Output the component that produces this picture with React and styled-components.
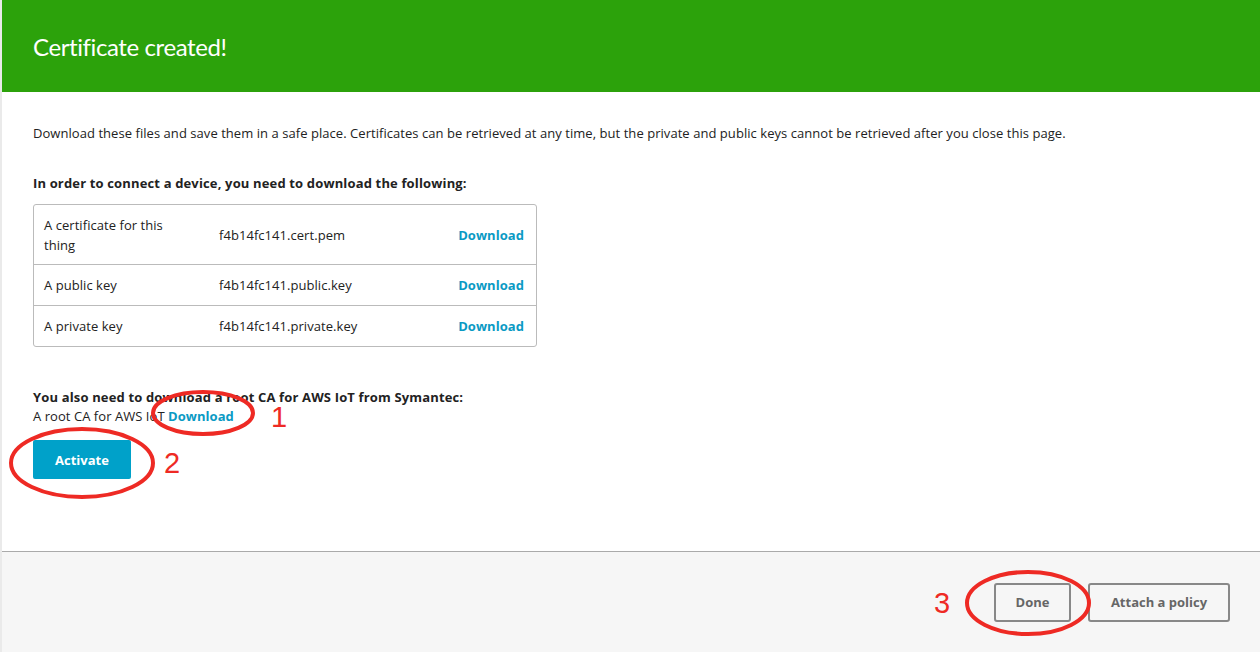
import React from 'react';
import styled, { createGlobalStyle } from 'styled-components';

const GlobalStyle = createGlobalStyle`
  html, body {
    margin: 0;
    padding: 0;
    background: #eaeaea;
  }
  body {
    font-family: "Open Sans", Arial, sans-serif;
    color: #222;
    letter-spacing: 0.05px;
  }
`;

const Page = styled.div`
  position: relative;
  margin-left: 2px;
  height: 652px;
  display: flex;
  flex-direction: column;
  background: #fff;
`;

const Header = styled.header`
  height: 92px;
  background: #2ca20b;
  display: flex;
  align-items: center;
  padding-left: 31px;
`;

const Title = styled.h1`
  margin: 0;
  color: #fff;
  font-family: Lato, "Open Sans", sans-serif;
  font-weight: 400;
  font-size: 24px;
  letter-spacing: -0.4px;
`;

const Body = styled.main`
  flex: 1;
  padding: 32px 31px 0;
  font-size: 13px;
`;

const Intro = styled.p`
  margin: 0 0 32px;
  line-height: 18px;
`;

const SectionTitle = styled.h2`
  margin: 0 0 ${p => p.gap}px;
  font-size: 13px;
  font-weight: 700;
  line-height: 18px;
  letter-spacing: 0.15px;
`;

const Table = styled.div`
  width: 502px;
  border: 1px solid #bbb;
  border-radius: 3px;
  margin-bottom: 41px;
`;

const Row = styled.div`
  display: grid;
  grid-template-columns: 175px 1fr auto;
  align-items: center;
  min-height: ${p => (p.tall ? 59 : 40)}px;
  padding: 0 12px 0 10px;
  border-top: ${p => (p.first ? 'none' : '1px solid #bbb')};
  line-height: 20px;
`;

const Cell = styled.div`
  max-width: ${p => p.max || 'none'};
  padding-right: 22px;
`;

const Link = styled.a`
  color: #0a9ac4;
  font-weight: 700;
  text-decoration: none;
  cursor: pointer;
`;

const Line = styled.div`
  line-height: 20px;
`;

const Primary = styled.button`
  margin-top: 14px;
  width: 98px;
  height: 39px;
  border: none;
  border-radius: 2px;
  background: #00a1c9;
  color: #fff;
  font-family: inherit;
  font-size: 13px;
  font-weight: 700;
`;

const Footer = styled.footer`
  height: 100px;
  background: #f6f6f6;
  border-top: 1px solid #aaa;
  display: flex;
  align-items: center;
  justify-content: flex-end;
  gap: 17px;
  padding-right: 30px;
`;

const Secondary = styled.button`
  height: 39px;
  width: ${p => p.w}px;
  padding: 0;
  background: #f6f6f6;
  border: 2px solid #888;
  border-radius: 3px;
  color: #666;
  font-family: inherit;
  font-size: 13px;
  font-weight: 700;
`;

const Marks = styled.svg`
  position: absolute;
  left: -2px;
  top: 0;
  pointer-events: none;
`;

const rows = [
  { label: 'A certificate for this thing', file: 'f4b14fc141.cert.pem', tall: true },
  { label: 'A public key', file: 'f4b14fc141.public.key' },
  { label: 'A private key', file: 'f4b14fc141.private.key' },
];

export default function App() {
  return (
    <>
      <GlobalStyle />
      <Page>
        <Header>
          <Title>Certificate created!</Title>
        </Header>
        <Body>
          <Intro>
            Download these files and save them in a safe place. Certificates can be retrieved at any time, but the private and public keys cannot be retrieved after you close this page.
          </Intro>
          <SectionTitle gap={12}>In order to connect a device, you need to download the following:</SectionTitle>
          <Table>
            {rows.map((r, i) => (
              <Row key={r.file} first={i === 0} tall={r.tall}>
                <Cell max="150px">{r.label}</Cell>
                <Cell>{r.file}</Cell>
                <Link>Download</Link>
              </Row>
            ))}
          </Table>
          <SectionTitle as="div" gap={0}>You also need to download a root CA for AWS IoT from Symantec:</SectionTitle>
          <Line>A root CA for AWS IoT <Link>Download</Link></Line>
          <Primary>Activate</Primary>
        </Body>
        <Footer>
          <Secondary w={77}>Done</Secondary>
          <Secondary w={142}>Attach a policy</Secondary>
        </Footer>
        <Marks width="1260" height="652" viewBox="0 0 1260 652">
          <g fill="none" stroke="#ee2a24" strokeWidth="4">
            <ellipse cx="203" cy="413" rx="50" ry="21" />
            <ellipse cx="82" cy="463" rx="71" ry="34" />
            <ellipse cx="1028" cy="603" rx="61" ry="31" />
          </g>
          <g fill="#ee2a24" fontFamily="Liberation Sans, Arial, sans-serif" fontSize="29">
            <text x="271" y="427">1</text>
            <text x="164" y="473">2</text>
            <text x="934" y="613">3</text>
          </g>
        </Marks>
      </Page>
    </>
  );
}
